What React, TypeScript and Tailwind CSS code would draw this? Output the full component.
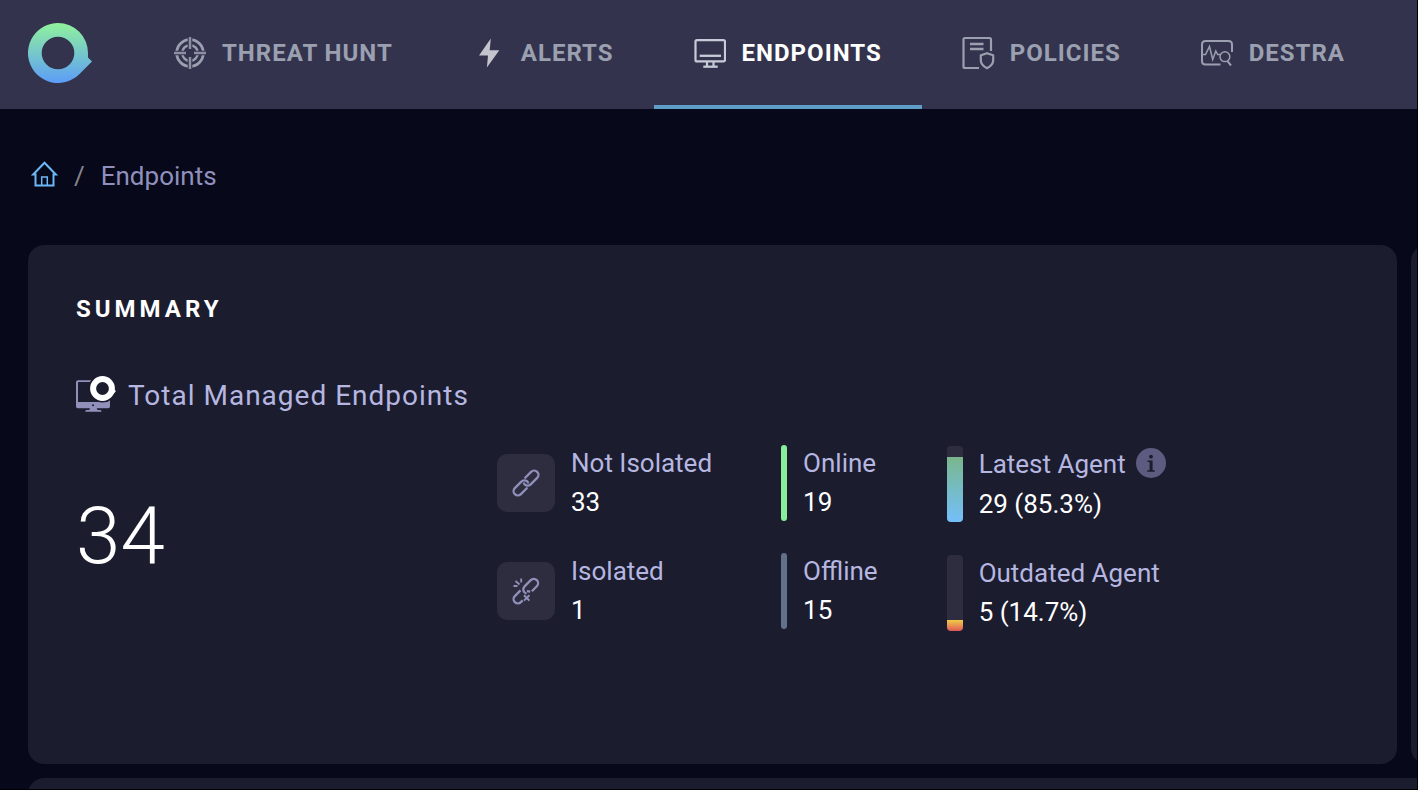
import type { ReactNode } from "react";

function LogoIcon() {
  return (
    <svg className="h-[60px] w-16 shrink-0" viewBox="0 0 64 60" aria-hidden="true">
      <defs>
        <linearGradient id="logo" x1="0" y1="0" x2="0" y2="1">
          <stop offset="0" stopColor="#90f29c" />
          <stop offset="1" stopColor="#5c9df8" />
        </linearGradient>
      </defs>
      <path
        fill="url(#logo)"
        fillRule="evenodd"
        d="M30 0A30 30 0 0 1 60 30V34.500L64 38.500L51 51.400A30 30 0 1 1 30 0ZM30 13.700A16.300 16.300 0 1 0 30 46.300A16.300 16.300 0 1 0 30 13.700Z"
      />
    </svg>
  );
}

function TargetIcon() {
  return (
    <svg className="size-8" viewBox="0 0 32 32" fill="none" aria-hidden="true">
      <circle cx="16" cy="16" r="13.300" stroke="#9ba0b1" strokeWidth="2.800" />
      <circle cx="16" cy="16" r="7.800" stroke="#9ba0b1" strokeWidth="2.500" />
      <path d="M16 0V13M16 19V32M0 16H13M19 16H32" stroke="#34334d" strokeWidth="4.600" />
      <path d="M16 0V12M16 20V32M0 16H12M20 16H32" stroke="#8d8fa4" strokeWidth="2.500" />
    </svg>
  );
}

function BoltIcon() {
  return (
    <svg className="size-8" viewBox="0 0 32 32" aria-hidden="true">
      <path fill="#c3c4cd" d="M17.800 1.500L6 18.500H15L13.900 30.500L26.300 13.200H16.700Z" />
    </svg>
  );
}

function MonitorIcon() {
  return (
    <svg className="size-8" viewBox="0 0 32 32" fill="none" stroke="#c5ccd8" strokeWidth="2.200" aria-hidden="true">
      <rect x="1.500" y="3.200" width="29.500" height="21.200" rx="1.500" />
      <path d="M5.700 18.800H27" strokeWidth="2.300" />
      <path d="M13 25V29.500M19.500 25V29.500" strokeWidth="2.200" />
      <path d="M9.300 29.700H23.700" strokeWidth="2.300" />
    </svg>
  );
}

function PolicyIcon() {
  return (
    <svg className="size-8 overflow-visible" viewBox="0 0 32 32" fill="none" stroke="#9ba0b1" strokeWidth="2.200" aria-hidden="true">
      <path d="M17 31H3Q1.500 31 1.500 29.500V2.500Q1.500 1 3 1H27.500Q29 1 29 2.500V14" />
      <path d="M8 7H21.500M8 12H21.500" strokeWidth="2.300" />
      <path d="M25 16.200L31.200 18.300V23.200Q31.200 28 25 31.200Q18.800 28 18.800 23.200V18.300Z" strokeLinejoin="round" />
    </svg>
  );
}

function DestraIcon() {
  return (
    <svg className="size-8" viewBox="0 0 32 32" fill="none" stroke="#9ba0b1" aria-hidden="true">
      <path d="M19.500 27.500H4.500Q1 27.500 1 24V7.500Q1 4 4.500 4H27.500Q31 4 31 7.500V15" strokeWidth="2" />
      <path d="M1 17.500H4.500L8.500 9.500L11.700 22.500L14.800 14L16.700 17.500H19.500" strokeWidth="1.500" />
      <circle cx="23.900" cy="19.700" r="4.900" strokeWidth="1.500" />
      <path d="M26.500 24.200L30 28.500" strokeWidth="2" />
    </svg>
  );
}

function HomeIcon() {
  return (
    <svg className="mb-1 h-[26px] w-[27px]" viewBox="0 0 27 26" fill="none" stroke="#6cb8f7" strokeWidth="2" aria-hidden="true">
      <path d="M4.500 13.500H2.200L13.500 1.700L24.800 13.500H22.500V24.600H4.500Z" />
      <path d="M10.700 24.500V16H16.300V24.500" strokeWidth="1.500" />
    </svg>
  );
}

function ManagedIcon() {
  return (
    <svg className="mb-1 h-9 w-10" viewBox="0 0 40 36" aria-hidden="true">
      <path
        fill="#9090ba"
        fillRule="evenodd"
        d="M2 4.300H20V6H2.600Q2 6 2 6.600V26H34V30.500Q34 32.300 32.200 32.300H20.700L21.500 34H24.500Q25.500 34.100 25.500 35.700H9.300Q9.300 34.100 10.300 34H13.200L14 32.300H1.800Q0 32.300 0 30.500V6.300Q0 4.300 2 4.300Z"
      />
      <path d="M33 22V27" stroke="#9090ba" strokeWidth="2" />
      <circle cx="17" cy="29.200" r="1" fill="#1b1c2e" />
      <circle cx="26.500" cy="12.500" r="14" fill="#1b1c2e" />
      <circle cx="26.500" cy="12.500" r="9.400" fill="none" stroke="#fff" strokeWidth="6" />
      <path d="M38 13.500L40 15L34.500 21.500Z" fill="#fff" />
    </svg>
  );
}

function LinkIcon() {
  return (
    <svg className="size-7" viewBox="-14 -14 28 28" fill="none" stroke="#9090ba" strokeWidth="2.300" strokeLinecap="round" aria-hidden="true">
      <g transform="rotate(-45)">
        <path d="M3.200 -4.300H11.500A4.300 4.300 0 0 1 11.500 4.300H2.300A4.300 4.300 0 0 1 -1.800 -1" />
        <path d="M-3.200 4.300H-11.500A4.300 4.300 0 0 1 -11.500 -4.300H-2.300A4.300 4.300 0 0 1 1.800 1" />
      </g>
    </svg>
  );
}

function BrokenLinkIcon() {
  return (
    <svg className="size-7" viewBox="-14 -14 28 28" fill="none" stroke="#9090ba" strokeWidth="2.300" aria-hidden="true">
      <g transform="rotate(-45)">
        <path d="M-1.500 2.200A4.300 4.300 0 0 1 2.300 -4.300H11A4.300 4.300 0 0 1 11 4.300H4" />
        <path d="M-3.500 -4.300H-11.500A4.300 4.300 0 0 0 -11.500 4.300H-9" />
        <path d="M0.500 0.800L2.500 3.500" />
      </g>
      <path d="M-12.500 -5H-8.500M-10.500 -10L-6.500 -6.500M-4.800 -12.500V-8.500" strokeWidth="1.800" />
      <path d="M-2 4.200L3.400 9.600M3.400 4.200L-2 9.600" strokeWidth="2" />
    </svg>
  );
}

function InfoIcon() {
  return (
    <svg className="mb-[3px] size-[30px]" viewBox="0 0 30 30" aria-hidden="true">
      <circle cx="15" cy="15" r="15" fill="#5d5c80" />
      <circle cx="15" cy="8.700" r="1.900" fill="#1b1c2e" />
      <path fill="#1b1c2e" d="M11.500 12.400H16.600V22.300H18.800V23.800H11.200V22.300H13.600V13.900H11.500Z" />
    </svg>
  );
}

const tabs = [
  { label: "THREAT HUNT", icon: <TargetIcon />, active: false },
  { label: "ALERTS", icon: <BoltIcon />, active: false },
  { label: "ENDPOINTS", icon: <MonitorIcon />, active: true },
  { label: "POLICIES", icon: <PolicyIcon />, active: false },
  { label: "DESTRA", icon: <DestraIcon />, active: false },
];

function Stat({ marker, label, value, info }: { marker: ReactNode; label: string; value: string; info?: boolean }) {
  return (
    <div className="flex items-center gap-4">
      {marker}
      <dl className="text-[26px] leading-[39px] whitespace-nowrap">
        <dt className={info ? "flex h-[41px] items-center gap-[10px] text-[#b6b7e0]" : "text-[#b6b7e0]"}>
          {label}
          {info && (
            <button type="button" aria-label="About the latest agent">
              <InfoIcon />
            </button>
          )}
        </dt>
        <dd className="text-white">{value}</dd>
      </dl>
    </div>
  );
}

function Tile({ children }: { children: ReactNode }) {
  return <span className="flex size-[58px] items-center justify-center rounded-[10px] bg-[#2d2d3f]">{children}</span>;
}

function Meter({ percent, fill }: { percent: number; fill: string }) {
  return (
    <span className="flex h-[76px] w-4 flex-col justify-end overflow-hidden rounded bg-[#2d2d3f]">
      <span className={fill} style={{ height: `${percent}%` }} />
    </span>
  );
}

export default function App() {
  return (
    <div className="flex h-screen flex-col overflow-hidden bg-black pr-px pb-px font-[Roboto,sans-serif]">
      <header className="flex h-[109px] shrink-0 items-center bg-[#34334d] pl-7">
        <a href="#home" aria-label="Home" className="mr-[42px] mb-1">
          <LogoIcon />
        </a>
        <nav className="flex self-stretch">
          {tabs.map((tab) => (
            <a
              key={tab.label}
              href="#tab"
              aria-current={tab.active ? "page" : undefined}
              className={
                tab.active
                  ? "flex items-center gap-4 border-b-4 border-[#5f9dc9] px-10 text-2xl font-bold tracking-[1px] whitespace-nowrap text-white"
                  : "flex items-center gap-4 border-b-4 border-transparent px-10 text-2xl font-bold tracking-[1px] whitespace-nowrap text-[#9ba0b1]"
              }
            >
              {tab.icon}
              {tab.label}
            </a>
          ))}
        </nav>
      </header>

      <main className="flex flex-1 flex-col overflow-hidden bg-[#070819] pl-7">
        <nav aria-label="Breadcrumb" className="mt-[47px] mb-[49px] ml-[3px] flex items-center gap-4 text-[26px] leading-10">
          <a href="#home" aria-label="Home">
            <HomeIcon />
          </a>
          <span className="text-[#85858c]">/</span>
          <span className="text-[#8f90bd]">Endpoints</span>
        </nav>

        <div className="flex shrink-0 gap-[14px]">
          <section className="flex-1 rounded-2xl bg-[#1b1c2e] px-12 pt-12 pb-[132px]">
            <h1 className="text-2xl leading-8 font-bold tracking-[4px] text-white">SUMMARY</h1>
            <h2 className="mt-[51px] flex items-center gap-3 text-[28px] leading-10 tracking-[1px] text-[#b6b7e0]">
              <ManagedIcon />
              Total Managed Endpoints
            </h2>
            <div className="mt-7 flex items-center">
              <p className="mb-1 w-[421px] text-[80px] leading-none font-light text-white">34</p>
              <div className="flex gap-[69px]">
                <div className="flex flex-col gap-[30px]">
                  <Stat marker={<Tile><LinkIcon /></Tile>} label="Not Isolated" value="33" />
                  <Stat marker={<Tile><BrokenLinkIcon /></Tile>} label="Isolated" value="1" />
                </div>
                <div className="flex flex-col gap-[30px]">
                  <Stat marker={<span className="h-[76px] w-1.5 rounded-full bg-[#89ee9b]" />} label="Online" value="19" />
                  <Stat marker={<span className="h-[76px] w-1.5 rounded-full bg-[#617189]" />} label="Offline" value="15" />
                </div>
                <div className="flex flex-col gap-[30px]">
                  <Stat
                    marker={<Meter percent={85.3} fill="bg-linear-to-b from-[#7ab68c] to-[#74bffa]" />}
                    label="Latest Agent"
                    value="29 (85.3%)"
                    info
                  />
                  <Stat
                    marker={<Meter percent={14.7} fill="bg-linear-to-b from-[#f0cb45] to-[#dc5553]" />}
                    label="Outdated Agent"
                    value="5 (14.7%)"
                  />
                </div>
              </div>
            </div>
          </section>
          <aside className="flex w-1.5 overflow-hidden">
            <div className="w-10 shrink-0 rounded-2xl bg-[#1b1c2e]" />
          </aside>
        </div>

        <section className="mt-[14px] h-16 shrink-0 rounded-tl-2xl bg-[#1b1c2e]" />
      </main>
    </div>
  );
}
